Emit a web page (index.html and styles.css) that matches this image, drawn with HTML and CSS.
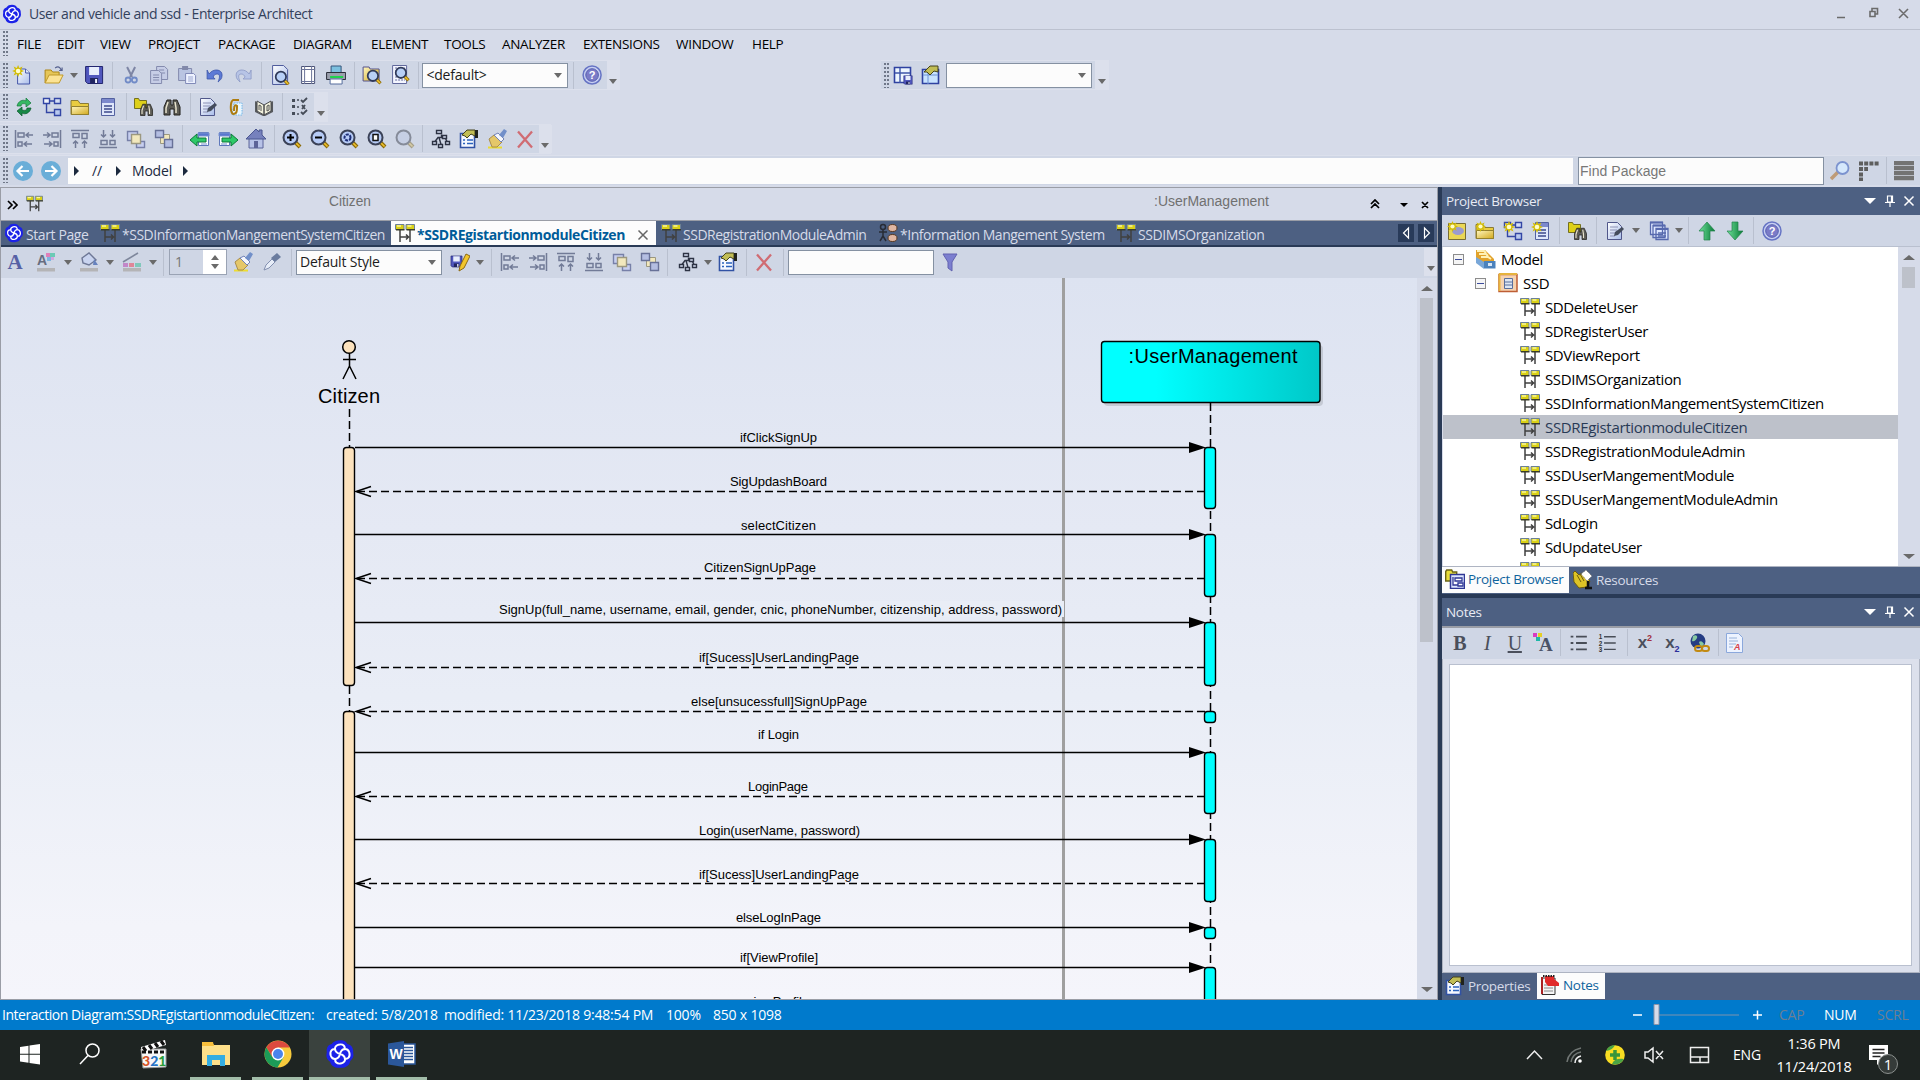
FILE: index.html
```html
<!DOCTYPE html>
<html lang="en">
<head>
<meta charset="utf-8">
<title>User and vehicle and ssd - Enterprise Architect</title>
<link rel="stylesheet" href="styles.css">
</head>
<body>
<svg class="sprite" width="0" height="0">
<defs>
<linearGradient id="cyan" x1="0" x2="1" y1="0" y2="0"><stop offset="0" stop-color="#0ff"/><stop offset=".25" stop-color="#0ff"/><stop offset="1" stop-color="#00c8c8"/></linearGradient>
<linearGradient id="gold" x1="0" x2="1" y1="0" y2="1"><stop offset="0" stop-color="#fff6c0"/><stop offset="1" stop-color="#d2a91c"/></linearGradient>
<linearGradient id="blue" x1="0" x2="1" y1="0" y2="1"><stop offset="0" stop-color="#fff"/><stop offset="1" stop-color="#a9bdea"/></linearGradient>
<linearGradient id="green" x1="0" x2="1"><stop offset="0" stop-color="#6fe09a"/><stop offset="1" stop-color="#067a35"/></linearGradient>
</defs>
<symbol id="logo" viewBox="0 0 20 20"><path d="M10 .8c3 0 4 1 5 2.600 2.500.6 4 2.500 3.800 5.600.6 2.600-.3 4.400-2 5.600-.4 3-3 4.800-6.800 4.600-3.500.2-5.800-1-6.600-4C1 13.500.6 11.500 1.200 9 .8 6 2 4 4.400 3.400 5.800 1.500 7.500.8 10 .8z" fill="#1c22e8"/><g fill="none" stroke="#fff" stroke-width="1.300"><path d="M10 10c-4-1-4.500-5-1-6.200M10 10c1-4 5-4.500 6.200-1M10 10c4 1 4.500 5 1 6.200M10 10c-1 4-5 4.500-6.200 1M9 3.800c3-.8 5 1 3.800 3.500M16.200 9c.8 3-1 5-3.500 3.800M11 16.200c-3 .8-5-1-3.800-3.500M3.800 11c-.8-3 1-5 3.500-3.800"/></g></symbol>
<symbol id="star" viewBox="0 0 12 12"><path d="M6 0l1.300 3L10.500 1.500 9 4.700 12 6 9 7.300l1.500 3.200L7.300 9 6 12 4.700 9 1.500 10.500 3 7.300 0 6l3-1.300L1.500 1.500 4.700 3z" fill="#d3bd08"/><circle cx="6" cy="6" r="2.300" fill="#fffdc8"/></symbol>
<symbol id="new" viewBox="0 0 20 20"><path d="M5.500 4h8l4 4v11h-12z" fill="url(#blue)" stroke="#4557a8"/><path d="M13.500 4v4h4" fill="#eaf3ff" stroke="#4557a8"/><use href="#star" width="12" height="12"/></symbol>
<symbol id="open" viewBox="0 0 20 20"><path d="M1 18V5h6l1.500 2H15v4" fill="#e6c658" stroke="#ae8717"/><path d="M1 18l4-8h14l-4 8z" fill="#fce394" stroke="#c09a2b"/><path d="M11 3c3-2 5-1 6 2M15 5.500h3V2.500" fill="none" stroke="#56618f" stroke-width="1.200"/></symbol>
<symbol id="save" viewBox="0 0 20 20"><path d="M1.500 1.500h17v17h-15l-2-2z" fill="#5057bd" stroke="#23266f"/><path d="M5 2h10v8H5z" fill="#e8eefc"/><path d="M6 13h8v5.500H6z" fill="#202560"/><path d="M11 14h2v4h-2z" fill="#f3f5ff"/></symbol>
<symbol id="cut" viewBox="0 0 20 20"><path d="M6 2l5 10M14 2L9 12" stroke="#7e86a5" stroke-width="2"/><g fill="none" stroke="#718bc7" stroke-width="1.800"><circle cx="7" cy="15" r="2.500"/><circle cx="13.300" cy="15" r="2.500"/></g></symbol>
<symbol id="copy" viewBox="0 0 20 20"><g fill="#c6cde6" stroke="#848bae"><path d="M7.500 1.500h8l3 3v10h-11z"/><path d="M1.500 5.500h8l3 3v10h-11z"/><path d="M4 10h6M4 12.500h6M4 15h6M10 5h5M12 8h4"/></g></symbol>
<symbol id="paste" viewBox="0 0 20 20"><path d="M1.500 3.500h13v12h-13z" fill="#b9c4e2" stroke="#848bae"/><path d="M5 1h6v4H5z" fill="#8289aa"/><path d="M8.500 8.500h8l2 2v8h-10z" fill="#eef2ff" stroke="#818ab8"/><path d="M11 12h5M11 14h5M11 16h5" stroke="#9ba7d0"/></symbol>
<symbol id="undo" viewBox="0 0 20 20"><path d="M4 9c4-6 13-5 13 1 0 4-2 5-4 7 2-5 2-8-1-8-2 0-3 1-4 3l2 2H2V5z" fill="#5d7ad6" stroke="#3c55a8" stroke-width=".8"/></symbol>
<symbol id="redo" viewBox="0 0 20 20"><path d="M16 9C12 3 3 4 3 10c0 4 2 5 4 7-2-5-2-8 1-8 2 0 3 1 4 3l-2 2h8V5z" fill="#b7c4e6" stroke="#8b98c4" stroke-width=".8"/></symbol>
<symbol id="mag" viewBox="0 0 20 20"><path d="M13 13l5 5" stroke="#8b6a08" stroke-width="4"/><path d="M13 13l4.500 4.500" stroke="#f0c22d" stroke-width="2"/><circle cx="8.500" cy="8.500" r="6.500" fill="#b8d0f7" stroke="#303a59" stroke-width="2.200"/></symbol>
<symbol id="preview" viewBox="0 0 20 20"><path d="M2.500.5h11l4 4v15h-15z" fill="url(#blue)" stroke="#4f5c9d"/><use href="#mag" x="4" y="5" width="16" height="16"/></symbol>
<symbol id="page" viewBox="0 0 20 20"><path d="M3.500 1.500h13v17h-13z" fill="#fff" stroke="#4c5377"/><path d="M6.500 1v18M13.500 1v18M3 4.500h14M3 16.500h14" stroke="#6c7499"/></symbol>
<symbol id="print" viewBox="0 0 20 20"><path d="M5 1h10v7H5z" fill="#7cc0df" stroke="#37577d"/><path d="M.5 7.500h19v7H.5z" fill="#9a9fac" stroke="#292d38"/><path d="M4 11h13v2H4z" fill="#20d24c"/><path d="M4 14h12v5H4z" fill="#fff" stroke="#566d9d"/></symbol>
<symbol id="findpkg" viewBox="0 0 20 20"><path d="M1 2h6l1 2h9v12H1z" fill="url(#gold)" stroke="#55528b"/><use href="#mag" x="4" y="4" width="16" height="16"/></symbol>
<symbol id="findpage" viewBox="0 0 20 20"><path d="M2.500.5h14v18h-14z" fill="#f4f6ff" stroke="#62699c"/><path d="M5 3h10M5 6h10M5 9h10M5 12h10M5 15h10" stroke="#62699c" stroke-dasharray="2 1"/><use href="#mag" x="4" y="1" width="16" height="16"/></symbol>
<symbol id="helpring" viewBox="0 0 20 20"><circle cx="10" cy="10" r="9" fill="#c8cff2" stroke="#6674c4" stroke-width="1.500"/><circle cx="10" cy="10" r="6.300" fill="#7b7bc7" stroke="#5560b0"/></symbol>
<symbol id="refresh" viewBox="0 0 20 20"><path d="M3 9c1-5 6-7 9-5V1l5 5-5 4V7c-3-1-5 0-5 2z" fill="#35b862" stroke="#14773b" stroke-width=".7"/><path d="M17 11c-1 5-6 7-9 5v3l-5-5 5-4v3c3 1 5 0 5-2z" fill="#178846" stroke="#0b5a2c" stroke-width=".7"/></symbol>
<symbol id="diag" viewBox="0 0 20 20"><g fill="url(#blue)" stroke="#3346a5" stroke-width="1.400"><path d="M1.500 1.500h6v5h-6zM12.500 1.500h6v5h-6zM12.500 12.500h6v6h-6z"/><path d="M7.500 4h5M4.500 6.500v9h8" fill="none"/></g></symbol>
<symbol id="folder" viewBox="0 0 20 20"><path d="M1 17.500V3.500h7l2 3h8.500v11z" fill="#e9cc40" stroke="#8a7b37"/><path d="M1.500 9.500h17v8h-17z" fill="url(#gold)" stroke="#93802e"/></symbol>
<symbol id="list" viewBox="0 0 20 20"><path d="M3.500 1.500h13v17h-13z" fill="#dfe7fb" stroke="#5361a0"/><path d="M4 2h12v4H4z" fill="#7c89cd"/><path d="M6 9h8M6 12h8M6 15h8" stroke="#3c498c" stroke-width="1.500"/></symbol>
<symbol id="bino" viewBox="0 0 20 20"><path d="M2 18V10l3-7h4v5h2V3h4l3 7v8h-6v-6H8v6z" fill="#5c5b55" stroke="#24231f"/><path d="M4 16v-5l2-6M14 16v-5l-1-6" stroke="#e8e3cd" stroke-width="1.500" fill="none"/></symbol>
<symbol id="pkgbino" viewBox="0 0 20 20"><path d="M.5 11.500v-10h4l1 2h7v8z" fill="#ded019" stroke="#74701e"/><use href="#bino" x="5" y="5" width="15" height="15"/></symbol>
<symbol id="edit" viewBox="0 0 20 20"><path d="M2.500 1.500h10l4 4v13h-14z" fill="url(#blue)" stroke="#50578a"/><path d="M5 6h8M5 9h7M5 12h6M5 15h5" stroke="#8c91b4"/><path d="M9 15l1-4 7-5 2 2-6 6z" fill="#444c5c"/></symbol>
<symbol id="clip" viewBox="0 0 20 20"><path d="M8 6h8v12H6z" fill="#e8f6ff" stroke="#73b8ea" stroke-dasharray="1.500 1"/><path d="M13 3H7C4 5 4 15 7 17c4 0 4-3 4-8-2-2-3 0-3 5" stroke="#ad7c10" stroke-width="2" fill="none"/></symbol>
<symbol id="book" viewBox="0 0 20 20"><path d="M1 4l3 2v9l6 3 6-3V6l3-2v11l-8 4H9l-8-4z" fill="#56595d"/><path d="M3 4l7 4v10l-7-4zM17 4l-7 4v10l7-4z" fill="#f1f0dc" stroke="#4a4b4e"/><path d="M5 13V8l2 1v5M13 9v5l2-1V8z" stroke="#555" fill="none"/></symbol>
<symbol id="checks" viewBox="0 0 20 20"><path d="M2 2h3v3H2zM2 8h3v3H2zM2 15h3v3H2z" fill="#454c58"/><path d="M7 3h2M7 10h2M7 17h2" stroke="#454c58" stroke-width="1.500"/><path d="M11 3l2 2 4-4M12 8l3 4M15 8l-3 4M11 15l2 2 4-4" stroke="#454c58" stroke-width="1.800" fill="none"/></symbol>
<symbol id="al" viewBox="0 0 20 20"><g fill="none" stroke="#727b97" stroke-width="1.500"><path d="M1.500 1v18M4 4h6v4H4zM4 13h4v4H4zM12 6h7M15 3.500L12 6l3 2.500M10 15h8M13 12.500L10 15l3 2.500"/></g></symbol>
<symbol id="at" viewBox="0 0 20 20"><g fill="none" stroke="#727b97" stroke-width="1.500"><path d="M1 1.500h18M3 4.500h6v4H3zM12 4.500h5v5h-5zM5.500 12v7M3 14.500L5.500 12 8 14.500M14.500 12v7M12 14.500l2.500-2.500 2.500 2.500"/></g></symbol>
<symbol id="ab" viewBox="0 0 20 20"><g fill="none" stroke="#727b97" stroke-width="1.500"><path d="M1 18.500h18M3 11.500h6v4H3zM12 11.500h5v4h-5zM5.500 1v7M3 5.500L5.500 8 8 5.500M14.500 1v7M12 5.500L14.500 8 17 5.500"/></g></symbol>
<symbol id="front" viewBox="0 0 20 20"><path d="M1.500 2.500h10v9h-10zM10.500 12.500h8v6h-8z" fill="#c7cff0" stroke="#7780a8" stroke-width="1.400"/><path d="M5.500 5.500h9v9h-9z" fill="#f2e8bd" stroke="#9c9880" stroke-width="1.400"/></symbol>
<symbol id="back" viewBox="0 0 20 20"><path d="M6.500 5.500h9v9h-9z" fill="#f2e8bd" stroke="#9c9880"/><path d="M1.500 1.500h8v7h-8zM10.500 10.500h8v8h-8z" fill="#b4bee2" stroke="#687198" stroke-width="1.400"/></symbol>
<symbol id="goL" viewBox="0 0 20 20"><path d="M8.500 3.500h10v13h-10z" fill="#fff" stroke="#5c76ba"/><path d="M8 4h11v3H8zM11 15h6" fill="#5877ce" stroke="#7891d0"/><path d="M0 11l7-6v4h9v4H7v4z" fill="#2ec968" stroke="#0d7839"/></symbol>
<symbol id="home" viewBox="0 0 20 20"><path d="M3 9h14v10H3z" fill="#b7c2e7" stroke="#5b659a"/><path d="M0 10L10 0l3 3V1h3v5l4 4z" fill="#7681bd" stroke="#4b5690"/><path d="M8 12h4v7H8z" fill="#5c6397"/></symbol>
<symbol id="zoom" viewBox="0 0 20 20"><path d="M13 13l5 5" stroke="#8b6a08" stroke-width="4"/><path d="M13 13l4.500 4.500" stroke="#f0c22d" stroke-width="1.700"/><circle cx="8.500" cy="8.500" r="7" fill="#b6cbf6" stroke="#3b4257" stroke-width="2"/></symbol>
<symbol id="zin" viewBox="0 0 20 20"><use href="#zoom"/><path d="M8.500 5v7M5 8.500h7" stroke="#000" stroke-width="2"/></symbol>
<symbol id="zout" viewBox="0 0 20 20"><use href="#zoom"/><path d="M5 8.500h7" stroke="#000" stroke-width="2"/></symbol>
<symbol id="zback" viewBox="0 0 20 20"><use href="#zoom"/><circle cx="8.500" cy="8.500" r="3" fill="none" stroke="#1c2d77" stroke-width="2" stroke-dasharray="3 1"/></symbol>
<symbol id="zfit" viewBox="0 0 20 20"><use href="#zoom"/><path d="M6 5.500h5v6H6z" fill="#fff" stroke="#111" stroke-width="1.500"/></symbol>
<symbol id="tree" viewBox="0 0 20 20"><g fill="#d9e0f3" stroke="#2d3344" stroke-width="1.400"><path d="M10.500 5.500v3M4 12.500l3-4h7l2 4M8 8.500l2 7" fill="none"/><path d="M5.500 1.500h5v3h-5zM11.500 6.500h4v3h-4zM1.500 12.500h4v3h-4zM7.500 15.500h4v3h-4zM14.500 12.500h4v3h-4z"/></g></symbol>
<symbol id="props" viewBox="0 0 20 20"><path d="M1.500 4.500h14v14h-14z" fill="#f5f8ff" stroke="#3152a4" stroke-width="1.600"/><path d="M4 11h2M4 14.500h2M8 11h6M8 14.500h6" stroke="#2a62bd" stroke-width="1.600"/><path d="M3 6l5-5h8v6l-4-2-4 4-2-2z" fill="#c1bd55" stroke="#45431c"/><path d="M16 1h3v8h-3z" fill="#20221c"/></symbol>
<symbol id="brush" viewBox="0 0 20 20"><path d="M1 18.500h14" stroke="#ecdc31" stroke-width="2"/><path d="M2 10l5-4 8 7-5 5H5z" fill="#e5c769" stroke="#a98d4b"/><path d="M7 6l7 7 3-3-6-6z" fill="#f6f7fc" stroke="#7182b6"/><path d="M12 6l5-6 3 2-4 7z" fill="#718fc9"/></symbol>
<symbol id="del" viewBox="0 0 20 20"><path d="M3 2.500l14 16M17 2.500L3 18.500" stroke="#d06c73" stroke-width="2.300"/></symbol>
<symbol id="tabsave" viewBox="0 0 20 20"><path d="M1.500 2.500h16v15h-16z" fill="#edf6ff" stroke="#2f42a1" stroke-width="1.600"/><path d="M7 3v15M2 8h15" stroke="#3e56a9" stroke-width="1.400"/><use href="#save" x="10" y="10" width="10" height="10"/></symbol>
<symbol id="tabprops" viewBox="0 0 20 20"><path d="M1.500 4.500h16v14h-16z" fill="#c8e3ff" stroke="#2f42a1" stroke-width="1.600"/><path d="M7 5v14M2 10h15" stroke="#6e94d5"/><path d="M3 7l6-6h8v6l-4-1-4 4-3-3z" fill="#c1bd55" stroke="#45431c"/></symbol>
<symbol id="seq" viewBox="0 0 20 20"><path d="M5 6v13M15 6v13M5 14h9M11 11.500l2.500 2.500-2.500 2.500" stroke="#404040" stroke-width="1.500" fill="none"/><path d="M.5 1.500h8.500v5H.5zM11 1.500h8.500v5H11z" fill="#d9d016" stroke="#6b8099"/><path d="M2 3h4M12.500 3h4" stroke="#f8f5a0" stroke-width="1.500"/><path d="M1 6.800h8.500M11.500 6.800H20" stroke="#3b3c2a" stroke-width="1.400"/></symbol>
<symbol id="use" viewBox="0 0 20 20"><g stroke="#272b35" stroke-width="1.500" fill="none"><circle cx="5" cy="4" r="2.500"/><path d="M5 7v6M1 9h8M5 13l-3 5M5 13l3 5"/></g><ellipse cx="14.500" cy="5" rx="4.500" ry="3.500" fill="#dfb6a2" stroke="#56371f"/><ellipse cx="14.500" cy="15" rx="4.500" ry="3.500" fill="#dfb6a2" stroke="#56371f"/></symbol>
<symbol id="bucket" viewBox="0 0 20 20"><path d="M3 6l7-5 7 7-7 5-6-2z" fill="#c9d4ef" stroke="#6e7896" stroke-width="1.400"/><path d="M15 7l4 6h-5z" fill="#6682be"/><path d="M1 16h18v3.500H1z" fill="#b4b4b6"/></symbol>
<symbol id="linecol" viewBox="0 0 20 20"><path d="M1 10L16 1" stroke="#7e879c" stroke-width="1.600"/><path d="M1 11h5v4H1z" fill="#c287c8"/><path d="M7 11h5v4H7z" fill="#df8698"/><path d="M13 11h6v4h-6z" fill="#80c8bb"/><path d="M1 16h18v3.500H1z" fill="#b4b4b6"/></symbol>
<symbol id="drop" viewBox="0 0 20 20"><path d="M2 18l2-5 6-6 3 3-6 6z" fill="#e7edf8" stroke="#8390b0"/><path d="M9 6l6-5 4 4-6 5z" fill="#6b7c9e"/></symbol>
<symbol id="savepen" viewBox="0 0 20 20"><use href="#save" x="0" y="3" width="13" height="13"/><path d="M9 19l1-5L16 2l4 2-6 12z" fill="#f2c62c" stroke="#8c6a14"/></symbol>
<symbol id="filter" viewBox="0 0 20 20"><path d="M3 2h14l-5 8v9l-4-3v-6z" fill="#7c7fd0" stroke="#6262b0"/></symbol>
<symbol id="npkg" viewBox="0 0 20 20"><path d="M1.500 2.500h17v16h-17z" fill="#ead755" stroke="#786d34"/><ellipse cx="11" cy="10" rx="6" ry="4" fill="#9b9bd0"/><use href="#star" width="11" height="11"/></symbol>
<symbol id="nfold" viewBox="0 0 20 20"><use href="#folder"/><use href="#star" width="11" height="11"/></symbol>
<symbol id="ndiag" viewBox="0 0 20 20"><use href="#diag"/><use href="#star" width="12" height="12"/></symbol>
<symbol id="nelem" viewBox="0 0 20 20"><use href="#list" x="1"/><use href="#star" width="12" height="12"/></symbol>
<symbol id="stack" viewBox="0 0 20 20"><g fill="#dfe8ff" stroke="#5769ae" stroke-width="1.300"><path d="M1.500 1.500h12v12h-12zM4 4.500h12v12H4zM7 7.500h12v11H7z"/><path d="M1 1.500h13M4 4.500h12M7 8h12" stroke-width="2"/><path d="M9 12h8M9 15h8"/></g></symbol>
<symbol id="up" viewBox="0 0 20 20"><path d="M10 1l8 9h-5v9H7v-9H2z" fill="url(#green)" stroke="#22824a" stroke-width=".7"/></symbol>
<symbol id="model" viewBox="0 0 20 20"><path d="M0 1h9l9 9v9H8L0 12z" fill="#e2a22a"/><path d="M1 2h7l2 2M3 5h7l2 2M5 8h7l3 2" fill="none" stroke="#fff1b6" stroke-width="2"/><path d="M0 8l8 5v7l-8-6z" fill="#79a7d8"/><path d="M8 12h11.500v7.500H8z" fill="#4b82bd"/><path d="M12 14h4v3h-4z" fill="#d7e7f6"/></symbol>
<symbol id="ssd" viewBox="0 0 20 20"><path d="M1 1.500h18v17H1z" fill="#f6d3b0" stroke="#be5e34" stroke-width="1.500"/><path d="M1 1h18M1.500 1v17" stroke="#e6b33e" stroke-width="2"/><path d="M6.500 5.500h8v10h-8z" fill="#dce6f3" stroke="#5a6f9c"/><path d="M7 9h7M7 12h7" stroke="#5a6f9c"/></symbol>
<symbol id="pbtab" viewBox="0 0 20 20"><path d="M.7 12V2.500l1-1.500h5l1 2h4v9z" fill="#e7dc3b" stroke="#6b6416" stroke-width="1.400"/><path d="M5.500 5.500h14v14h-14z" fill="#dde6ff" stroke="#2f3795" stroke-width="1.500"/><path d="M10 9h7v3h-7zM13 14h5v3h-5zM8 8v8h5" fill="#fff" stroke="#2f3795" stroke-width="1.300"/></symbol>
<symbol id="res" viewBox="0 0 20 20"><path d="M0 3l2-2 4 4 3-2 8 8-3 6-8 1-5-6z" fill="#ddc326" stroke="#6d5c0e"/><path d="M4 5l4 7M7 4l4 7" stroke="#6d5c0e"/><path d="M8 4l5-4 6 6-5 5z" fill="#fff" stroke="#666" stroke-dasharray="1 1"/><path d="M15 11v8M12 18h7" stroke="#111" stroke-width="2.500"/></symbol>
<symbol id="notes" viewBox="0 0 20 20"><path d="M2 3h13v16.500H2z" fill="#f5f5f5" stroke="#333"/><path d="M4 10h9M4 13h9M4 16h9" stroke="#888"/><path d="M2 2v17" stroke="#a22" stroke-width="2"/><path d="M5 1h9v3l5 4v3H8L5 7z" fill="#e12a2a"/><path d="M3 1h12" stroke="#222" stroke-width="2" stroke-dasharray="1.500 1"/></symbol>
<symbol id="ul" viewBox="0 0 20 20"><path d="M1 3h3M1 10h3M1 17h3M7 3h12M7 10h12M7 17h12" stroke="#484d57" stroke-width="2"/></symbol>
<symbol id="globe" viewBox="0 0 20 20"><circle cx="8" cy="8" r="7.500" fill="#243c84"/><path d="M3 3c3-2 5 0 4 2s-3 4-5 3zM9 9c2-2 4 0 5 2l-3 4z" fill="#87c9a1"/><g fill="none" stroke="#c28a12" stroke-width="2"><rect x="5" y="13" width="7" height="5" rx="2.500"/><rect x="12" y="13" width="7" height="5" rx="2.500"/></g></symbol>
<symbol id="search" viewBox="0 0 20 20"><path d="M1 18l7-7" stroke="#bf9b77" stroke-width="3.500"/><circle cx="12.500" cy="7" r="6" fill="#d5e8fc" stroke="#7c93cf" stroke-width="1.800"/></symbol>
<symbol id="pin" viewBox="0 0 12 12"><path d="M3.500 1h5v6h-5zM7.500 1v6M1 7.500h10M6 7.500V12" fill="none" stroke="#fff" stroke-width="1.200"/></symbol>
<symbol id="x" viewBox="0 0 12 12"><path d="M1.500 1.500l9 9M10.500 1.500l-9 9" stroke="currentColor" stroke-width="1.500"/></symbol>
</svg>

<header class="title"><svg class="i20"><use href="#logo"/></svg><span class="title-text">User and vehicle and ssd - Enterprise Architect</span>
<div class="winbtns"><svg width="80" height="20"><path d="M2 13.500h8M35 7.500h5v5h-5zM37 7V4.500h5.500V10H40M64 5l9 9M73 5l-9 9" fill="none" stroke="#6b6b6b" stroke-width="1.600"/></svg></div></header>
<nav class="menu"><i class="grip"></i><span class="w40">FILE</span><span class="w43">EDIT</span><span class="w48">VIEW</span><span class="w70">PROJECT</span><span class="w75">PACKAGE</span><span class="w78">DIAGRAM</span><span class="w73">ELEMENT</span><span class="w58">TOOLS</span><span class="w81">ANALYZER</span><span class="w93">EXTENSIONS</span><span class="w76">WINDOW</span><span>HELP</span></nav>

<div class="row r1">
<div class="bar b1"><i class="grip"></i><svg class="ic"><use href="#new"/></svg><svg class="ic gap4"><use href="#open"/></svg><i class="dd"></i><svg class="ic"><use href="#save"/></svg><i class="sep"></i><svg class="ic"><use href="#cut"/></svg><svg class="ic"><use href="#copy"/></svg><svg class="ic"><use href="#paste"/></svg><svg class="ic"><use href="#undo"/></svg><svg class="ic"><use href="#redo"/></svg><i class="sep"></i><svg class="ic"><use href="#preview"/></svg><svg class="ic"><use href="#page"/></svg><svg class="ic"><use href="#print"/></svg><i class="sep"></i><svg class="ic"><use href="#findpkg"/></svg><svg class="ic"><use href="#findpage"/></svg><i class="sep"></i><div class="combo">&lt;default&gt;<i class="dd"></i></div><i class="sep hs"></i><svg class="ic" viewBox="0 0 20 20"><use href="#helpring"/><text class="qm" x="10" y="14" text-anchor="middle">?</text></svg><i class="over"></i></div>
<div class="bar b1b"><i class="grip"></i><svg class="ic"><use href="#tabsave"/></svg><svg class="ic"><use href="#tabprops"/></svg><div class="combo end"><i class="dd"></i></div><i class="over"></i></div>
</div>
<div class="row r2"><div class="bar b2"><i class="grip"></i><svg class="ic"><use href="#refresh"/></svg><svg class="ic"><use href="#diag"/></svg><svg class="ic"><use href="#folder"/></svg><svg class="ic"><use href="#list"/></svg><i class="sep"></i><svg class="ic"><use href="#pkgbino"/></svg><svg class="ic"><use href="#bino"/></svg><i class="sep"></i><svg class="ic"><use href="#edit"/></svg><svg class="ic"><use href="#clip"/></svg><svg class="ic"><use href="#book"/></svg><i class="sep"></i><svg class="ic"><use href="#checks"/></svg><i class="over"></i></div></div>
<div class="row r3"><div class="bar b2"><i class="grip"></i><svg class="ic"><use href="#al"/></svg><svg class="ic flip"><use href="#al"/></svg><svg class="ic"><use href="#at"/></svg><svg class="ic"><use href="#ab"/></svg><svg class="ic"><use href="#front"/></svg><svg class="ic"><use href="#back"/></svg><i class="sep"></i><svg class="ic"><use href="#goL"/></svg><svg class="ic flip"><use href="#goL"/></svg><svg class="ic"><use href="#home"/></svg><i class="sep"></i><svg class="ic"><use href="#zin"/></svg><svg class="ic"><use href="#zout"/></svg><svg class="ic"><use href="#zback"/></svg><svg class="ic"><use href="#zfit"/></svg><svg class="ic dim"><use href="#zoom"/></svg><i class="sep"></i><svg class="ic"><use href="#tree"/></svg><svg class="ic"><use href="#props"/></svg><svg class="ic"><use href="#brush"/></svg><svg class="ic"><use href="#del"/></svg><i class="over"></i></div></div>

<div class="nav"><i class="grip"></i><svg class="navbtns" width="60" height="28"><g fill="#6aaed8"><circle cx="15" cy="14" r="10"/><circle cx="43" cy="14" r="10"/></g><path d="M21 14H10M14.500 9l-5 5 5 5M37 14h11M43.500 9l5 5-5 5" stroke="#fff" stroke-width="2.200" fill="none"/></svg>
<div class="crumbs"><i class="tri"></i><span class="slashes">//</span><i class="tri"></i><span class="crumb">Model</span><i class="tri"></i></div>
<div class="find">Find Package</div>
<svg class="i20 s"><use href="#search"/></svg>
<svg class="dots" width="20" height="20"><path d="M0 2.500h20M0 8h9M0 13.500h4M0 18.500h4" stroke="#5e5e5e" stroke-width="4" stroke-dasharray="4 1.200"/></svg>
<i class="sep"></i><i class="lines"></i></div>

<main class="main">
<section class="doc">
<div class="strip"><svg width="1436" height="32"><g fill="none" stroke="#000" stroke-width="1.700"><path d="M7 13l4 4-4 4M12 13l4 4-4 4M1370 16l4-4 4 4M1370 20l4-4 4 4M1421 14l6 6M1427 14l-6 6"/></g><path d="M1399 15h8l-4 4z"/><use href="#seq" x="25" y="7" width="17" height="17"/><g class="heads"><text x="328" y="18" textLength="42" lengthAdjust="spacingAndGlyphs">Citizen</text><text x="1153" y="18" textLength="115" lengthAdjust="spacingAndGlyphs">:UserManagement</text></g></svg></div>
<div class="tabs">
<div class="tab t1"><svg class="i20"><use href="#logo"/></svg>Start Page</div>
<div class="tab t2"><svg class="i20"><use href="#seq"/></svg>*SSDInformationMangementSystemCitizen</div>
<div class="tab t3 on"><svg class="i20"><use href="#seq"/></svg>*SSDREgistartionmoduleCitizen<svg class="tx"><use href="#x"/></svg></div>
<div class="tab t4"><svg class="i20"><use href="#seq"/></svg>SSDRegistrationModuleAdmin</div>
<div class="tab t5"><svg class="i20"><use href="#use"/></svg>*Information Mangement System</div>
<div class="tab t6"><svg class="i20"><use href="#seq"/></svg>SSDIMSOrganization</div>
<svg class="tabnav" width="37" height="18"><path d="M0 0h16v18H0zM20 0h16v18H20z" fill="#283a59"/><path d="M10.500 4v10l-5-5zM26.500 4v10l5-5z" fill="none" stroke="#fff" stroke-width="1.200"/></svg>
</div>
<div class="dtb"><b class="ic fa">A</b><svg class="ic ac" viewBox="0 0 20 20"><text class="fa2" x="1" y="13">A</text><path d="M10 1h4v4h-4z" fill="#df7fb9"/><path d="M14 1h5v4h-5z" fill="#6bcab5"/><path d="M11 5h4v4h-4z" fill="#7eb4df"/><path d="M15 5h3v3h-3z" fill="#d2a5df"/><path d="M1 16h18v3.500H1z" fill="#b4b4b6"/></svg><i class="dd w15"></i><svg class="ic"><use href="#bucket"/></svg><i class="dd w14"></i><svg class="ic gap1"><use href="#linecol"/></svg><i class="dd w13"></i><i class="sep"></i><div class="spin"><span>1</span><b><i class="uu"></i><i class="dd"></i></b></div><svg class="ic"><use href="#brush"/></svg><svg class="ic gap1"><use href="#drop"/></svg><i class="sep s4"></i><div class="combo">Default Style<i class="dd"></i></div><svg class="ic pen"><use href="#savepen"/></svg><i class="dd w12"></i><i class="sep s5"></i><svg class="ic"><use href="#al"/></svg><svg class="ic flip"><use href="#al"/></svg><svg class="ic"><use href="#at"/></svg><svg class="ic"><use href="#ab"/></svg><svg class="ic"><use href="#front"/></svg><svg class="ic"><use href="#back"/></svg><i class="sep"></i><svg class="ic tr"><use href="#tree"/></svg><i class="dd w12"></i><svg class="ic"><use href="#props"/></svg><i class="sep"></i><svg class="ic"><use href="#del"/></svg><i class="sep s4"></i><div class="combo"></div><svg class="ic fl"><use href="#filter"/></svg><i class="over"></i></div>
<div class="view">
<svg class="diagram" viewBox="1 278 1416 721" width="1416" height="721">
<rect x="1062" y="278" width="3" height="721" fill="#9f9f9f"/>
<g stroke="#000" stroke-width="1.500" fill="none"><path d="M349.500 409V447M349.500 686V711" stroke-dasharray="8 4"/><path d="M1210.500 403V999" stroke-dasharray="8 4"/>
<path d="M349.500 353V367M343 359.500h13M349.500 366L343 379M349.500 366l6.500 13"/><circle cx="349" cy="347" r="6.300" fill="#fce2bd"/></g>
<rect x="1104" y="345" width="219" height="61" rx="4" fill="#000" opacity=".12"/>
<rect x="1101.500" y="341.500" width="218.500" height="61" rx="3" fill="url(#cyan)" stroke="#000" stroke-width="1.400"/>
<g stroke="#000" stroke-width="1.500"><path d="M355 447.500H1195M355 534.500H1195M355 622.500H1195M355 752.500H1195M355 839.500H1195M355 927.500H1195M355 967.500H1195"/>
<path d="M1205 491.500H356M1205 578.500H356M1205 667.500H356M1205 711.500H356M1205 796.500H356M1205 883.500H356" stroke-dasharray="8 4"/>
<path d="M371 486.500L356 491.500l15 5M371 573.500L356 578.500l15 5M371 662.500L356 667.500l15 5M371 706.500L356 711.500l15 5M371 791.500L356 796.500l15 5M371 878.500L356 883.500l15 5" fill="none"/></g>
<path d="M1189 442l17 5.500-17 5.500zM1189 529l17 5.500-17 5.500zM1189 617l17 5.500-17 5.500zM1189 747l17 5.500-17 5.500zM1189 834l17 5.500-17 5.500zM1189 922l17 5.500-17 5.500zM1189 962l17 5.500-17 5.500z"/>
<g stroke="#000" stroke-width="1.400" fill="#fce2bd"><rect x="343.500" y="447.500" width="11" height="238" rx="3"/><rect x="343.500" y="711.500" width="11" height="300" rx="3"/></g>
<g stroke="#000" stroke-width="1.400" fill="#0ff"><rect x="1204.500" y="447.500" width="11" height="61" rx="3"/><rect x="1204.500" y="534.500" width="11" height="62" rx="3"/><rect x="1204.500" y="622.500" width="11" height="63" rx="3"/><rect x="1204.500" y="711.500" width="11" height="11" rx="3"/><rect x="1204.500" y="752.500" width="11" height="61" rx="3"/><rect x="1204.500" y="839.500" width="11" height="62" rx="3"/><rect x="1204.500" y="927.500" width="11" height="11" rx="3"/><rect x="1204.500" y="967.500" width="11" height="50" rx="3"/></g>
<rect x="499" y="601" width="565" height="16" fill="#e9edf6"/>
<g class="names"><text x="318" y="403" textLength="62">Citizen</text><text x="1128.500" y="363" textLength="169">:UserManagement</text></g>
<g class="msgs"><text x="740" y="442" textLength="77">ifClickSignUp</text><text x="730" y="486" textLength="97">SigUpdashBoard</text><text x="741" y="530" textLength="75">selectCitizen</text><text x="704" y="572" textLength="112">CitizenSignUpPage</text><text x="499" y="614" textLength="563">SignUp(full_name, username, email, gender, cnic, phoneNumber, citizenship, address, password)</text><text x="699" y="662" textLength="160">if[Sucess]UserLandingPage</text><text x="691" y="706" textLength="176">else[unsucessfull]SignUpPage</text><text x="758" y="739" textLength="41">if Login</text><text x="748" y="791" textLength="60">LoginPage</text><text x="699" y="835" textLength="161">Login(userName, password)</text><text x="699" y="879" textLength="160">if[Sucess]UserLandingPage</text><text x="736" y="922" textLength="85">elseLogInPage</text><text x="740" y="962" textLength="78">if[ViewProfile]</text><text x="747" y="1006" textLength="62">viewProfile</text></g>
</svg>
<div class="vs"><i class="uu"></i><i class="thumb"></i><i class="dd"></i></div>
</div>
</section>

<aside class="side">
<section class="panel browser">
<div class="ph">Project Browser<span class="pbtns"><i class="dd"></i><svg class="pi"><use href="#pin"/></svg><svg class="pi"><use href="#x"/></svg></span></div>
<div class="ptb"><svg class="ic"><use href="#npkg"/></svg><svg class="ic"><use href="#nfold"/></svg><svg class="ic"><use href="#ndiag"/></svg><svg class="ic"><use href="#nelem"/></svg><i class="sep"></i><svg class="ic"><use href="#pkgbino"/></svg><i class="sep"></i><svg class="ic"><use href="#edit"/></svg><i class="dd w15"></i><svg class="ic gap1"><use href="#stack"/></svg><i class="dd w12"></i><i class="sep"></i><svg class="ic"><use href="#up"/></svg><svg class="ic down"><use href="#up"/></svg><i class="sep"></i><svg class="ic" viewBox="0 0 20 20"><use href="#helpring"/><text class="qm" x="10" y="14" text-anchor="middle">?</text></svg></div>
<div class="treebox"><ul class="tree">
<li class="l0"><i class="minus"></i><svg class="i20"><use href="#model"/></svg>Model</li>
<li class="l1"><i class="minus"></i><svg class="i20"><use href="#ssd"/></svg>SSD</li>
<li><svg class="i20"><use href="#seq"/></svg>SDDeleteUser</li>
<li><svg class="i20"><use href="#seq"/></svg>SDRegisterUser</li>
<li><svg class="i20"><use href="#seq"/></svg>SDViewReport</li>
<li><svg class="i20"><use href="#seq"/></svg>SSDIMSOrganization</li>
<li><svg class="i20"><use href="#seq"/></svg>SSDInformationMangementSystemCitizen</li>
<li class="sel"><svg class="i20"><use href="#seq"/></svg>SSDREgistartionmoduleCitizen</li>
<li><svg class="i20"><use href="#seq"/></svg>SSDRegistrationModuleAdmin</li>
<li><svg class="i20"><use href="#seq"/></svg>SSDUserMangementModule</li>
<li><svg class="i20"><use href="#seq"/></svg>SSDUserMangementModuleAdmin</li>
<li><svg class="i20"><use href="#seq"/></svg>SdLogin</li>
<li><svg class="i20"><use href="#seq"/></svg>SdUpdateUser</li>
<li><svg class="i20"><use href="#seq"/></svg></li>
</ul><div class="vs"><i class="uu"></i><i class="thumb"></i><i class="dd"></i></div></div>
<div class="ptabs"><div class="pt on pb"><svg class="i20"><use href="#pbtab"/></svg>Project Browser</div><div class="pt rs"><svg class="i20"><use href="#res"/></svg>Resources</div></div>
</section>
<section class="panel notes">
<div class="ph">Notes<span class="pbtns"><i class="dd"></i><svg class="pi"><use href="#pin"/></svg><svg class="pi"><use href="#x"/></svg></span></div>
<div class="ntb"><b class="fmt">B</b><i class="fmt">I</i><u class="fmt">U</u><svg class="ic" viewBox="0 0 20 20"><text class="ta" x="6" y="18">A</text><path d="M0 0h4v4H0z" fill="#d93cc1"/><path d="M5 0h4v4H5z" fill="#e5ce24"/><path d="M3 4h4v4H3z" fill="#1bb7a7"/></svg><i class="sep"></i><svg class="il"><use href="#ul"/></svg><svg class="il" viewBox="0 0 20 20"><path d="M7 3h13M7 10h13M7 17h13" stroke="#484d57" stroke-width="1.500"/><g class="nums"><text x="1" y="6">1</text><text x="1" y="13">2</text><text x="1" y="19.700">3</text></g></svg><i class="sep ns"></i><span class="sx">x<sup>2</sup></span><span class="sx">x<sub>2</sub></span><svg class="ic"><use href="#globe"/></svg><i class="sep"></i><svg class="ic dcl" viewBox="0 0 20 20"><path d="M2.500.5h12l4 4v15h-16z" fill="#edf3ff" stroke="#8ba8dc"/><path d="M5 5h8M5 8h9M5 11h7M5 14h4" stroke="#98b2d9"/><text class="da" x="10" y="17">A</text></svg></div>
<div class="nbody"><div class="ntext"></div></div>
<div class="ptabs bt"><div class="pt pr"><svg class="i20"><use href="#props"/></svg>Properties</div><div class="pt on nt"><svg class="i20"><use href="#notes"/></svg>Notes</div></div>
</section>
</aside>
</main>

<footer class="status"><span class="s1">Interaction Diagram:SSDREgistartionmoduleCitizen:</span><span class="s2">created: 5/8/2018</span><span class="s3">modified: 11/23/2018 9:48:54 PM</span><span class="st4">100%</span><span>850 x 1098</span>
<svg class="slider" width="130" height="26"><path d="M0 13h9M120 13h9M124.500 8.500v9" stroke="#fff" stroke-width="1.500"/><path d="M22 13H106" stroke="#7d93ad"/><path d="M21 2.500h5v20h-5z" fill="#d6dbe9" stroke="#8a93a8"/></svg><span class="s6">CAP</span><span class="s7">NUM</span><span class="s6 sc">SCRL</span></footer>

<footer class="task">
<div class="app a1"><svg width="22" height="22"><path d="M1 4l8.500-1.200v8H1zM10.500 2.600L21 1v9.800H10.500zM1 11.800h8.500v8L1 18.600zM10.500 11.800H21V21.500l-10.500-1.500z" fill="#fff"/></svg></div>
<div class="app a2"><svg width="22" height="22"><circle cx="13.500" cy="7.500" r="6.500" fill="none" stroke="#fff" stroke-width="1.500"/><path d="M9 12.500L1 21" stroke="#fff" stroke-width="1.500"/></svg></div>
<div class="app a3"><svg width="28" height="30"><path d="M1 10h25v18l-23 1z" fill="#f7f7f7" stroke="#999"/><path d="M1 8l24-7 1 5-24 7z" fill="#fff"/><path d="M3 8l3 4M9 6l3 4M15 4l3 4M21 2l3 4" stroke="#111" stroke-width="3"/><path d="M2 13h24" stroke="#111" stroke-width="3" stroke-dasharray="4 2"/><text class="clap" x="2" y="27"><tspan fill="#d65528">3</tspan><tspan fill="#2672c4">2</tspan><tspan fill="#2e9c3a">1</tspan></text></svg></div>
<div class="app a4 run"><svg width="28" height="26"><path d="M0 2h10l2 2h16v20H0z" fill="#fee08a"/><path d="M0 1h11l1 4H0z" fill="#f8bf3c"/><path d="M5 14h18v11h-5v-6h-8v6H5z" fill="#34ade2"/></svg></div>
<div class="app a5 run"><svg width="28" height="28" viewBox="-14 -14 28 28"><circle r="13.500" fill="#f7ca3c"/><path d="M0-6.500H11.700A13.500 13.500 0 0 0-11.700-6.700L-5.600 3.300Z" fill="#dc4a3e"/><path d="M-11.700-6.700A13.500 13.500 0 0 0-.5 13.500L5.600 3.300-5.600 3.300Z" fill="#1c9c58"/><circle r="6.400" fill="#fff"/><circle r="5" fill="#4a84ec"/></svg></div>
<div class="app a6 cur"><svg width="30" height="30"><use href="#logo"/></svg></div>
<div class="app a7 run"><svg width="28" height="28"><path d="M14 4h13v20H14z" fill="#fff" stroke="#2b579a" stroke-width="1.500"/><path d="M15 7.500h10M15 10.500h10M15 13.500h10M15 16.500h10M15 19.500h10" stroke="#2b579a" stroke-width="1.500"/><path d="M0 3.500L16 1v26L0 24.500z" fill="#2b579a"/><text class="wl" x="8" y="19" text-anchor="middle">W</text></svg></div>
<svg class="tray" width="200" height="50"><g fill="none" stroke="#eee" stroke-width="1.500"><path d="M2 29l7.500-8 7.500 8M120 22h3l5-4v14l-5-4h-3zM131 21l7 8M138 21l-7 8M165.500 17.500h18v15h-18zM165.500 27h18M175 27v5"/><path d="M42 32c1-7 5-12 14-14M46 32c1-5 4-9 10-10" stroke="#707674"/><path d="M50 33c0-4 2-6 6-7"/></g><circle cx="55" cy="31" r="1.800" fill="#fff"/><circle cx="90" cy="25" r="9.800" fill="#f9dd22"/><path d="M81 21a10 10 0 0 1 9-6q-2 5-9 6M99 29a10 10 0 0 1-12 5q2-6 12-5" fill="#4ba444"/><path d="M90 20v10M85 25h10" stroke="#36953b" stroke-width="3.500"/></svg>
<span class="lang">ENG</span>
<div class="clock"><span>1:36 PM</span><span>11/24/2018</span></div>
<svg class="action" width="40" height="50"><path d="M1 15h19v15h-6l-5 5v-5H1z" fill="#fff"/><path d="M4.500 19.500h12M4.500 23h12M4.500 26.500h8" stroke="#222" stroke-width="1.300"/><circle cx="20" cy="34" r="9.500" fill="#353b39" stroke="#8b908e"/><text x="20" y="39.500" text-anchor="middle" fill="#fff" font-family="Open Sans" font-size="15">1</text></svg>
</footer>
</body>
</html>
```
FILE: styles.css
```css
* { box-sizing: border-box; }
body { margin: 0; width: 1920px; height: 1080px; overflow: hidden; display: flex; flex-direction: column; background: #d6dbe9; color: #1b1b1b; font: 14px/20px "Open Sans", "Noto Sans", sans-serif; letter-spacing: -.2px; white-space: nowrap; }
svg { display: block; flex: none; }
i { font-style: normal; flex: none; }
.sprite { position: absolute; }
.i20 { width: 20px; height: 20px; }
.ic { width: 28px; height: 20px; padding: 0 4px; }
.flip { transform: scaleX(-1); }
.down { transform: scaleY(-1); }
.dim { opacity: .5; filter: grayscale(.4); }
.gap1 { margin-left: 1px; }
.gap4 { margin-left: 4px; }
.qm { font: bold 11px "Liberation Sans", sans-serif; fill: #fff; letter-spacing: 0; }
.sep { width: 1px; height: 27px; margin: 0 3.500px; background: #b9c0cf; }
.grip { width: 5px; height: 25px; margin: 0 2px 0 3px; background: radial-gradient(circle at 1px 1px, #6f7788 .8px, transparent 1px) 0 0/3px 4px; }
.dd, .uu { display: flex; width: 12px; justify-content: center; }
.dd::before, .uu::before { content: ""; border: 4px solid transparent; border-top: 5px solid #6a6a6a; border-bottom: 0; }
.uu::before { border-top: 0; border-bottom: 5px solid #6a6a6a; }
.w12 { width: 12px; }
.w13 { width: 13px; }
.w14 { width: 14px; }
.w15 { width: 15px; }
.over { width: 13px; height: 28px; margin-left: auto; background: #dce0ec; display: flex; align-items: flex-end; justify-content: center; padding-bottom: 5px; }
.over::before { content: ""; border: 4px solid transparent; border-top: 5px solid #6a6a6a; border-bottom: 0; }
.combo { width: 146px; height: 25px; border: 1px solid #8591a2; background: #fcfcfc; display: flex; align-items: center; justify-content: space-between; padding: 0 3px; flex: none; }
.end { justify-content: flex-end; }

.title { height: 30px; border-bottom: 1px solid #bcc1cf; display: flex; align-items: center; padding: 0 0 2px 2px; color: #33415c; letter-spacing: -.41px; }
.title-text { margin-left: 7px; }
.winbtns { margin-left: auto; width: 85px; }
.menu { height: 30px; display: flex; align-items: center; color: #000; padding-bottom: 3px; }
.menu .grip { margin-right: 9px; }
.menu span { flex: none; letter-spacing: -.3px; font-size: 13.500px; }
.w40 { width: 40px; } .w43 { width: 43px; } .w48 { width: 48px; } .w70 { width: 70px; } .w75 { width: 75px; } .w78 { width: 78px; } .w73 { width: 73px; } .w58 { width: 58px; } .w81 { width: 81px; } .w93 { width: 93px; } .w76 { width: 76px; }

.row { display: flex; align-items: center; }
.r1, .r2 { height: 31px; }
.r1 { padding-bottom: 1px; }
.r3 { height: 33px; }
.bar { height: 30px; display: flex; align-items: center; background: #cfd6e5; border: 1px solid #dce0ec; border-left: 0; }
.b1 { width: 620px; }
.b1 .grip { margin-right: 0; }
.b1 .ic { width: 28.200px; }
.hs { margin: 0 4.500px; }
.b1b { width: 228px; margin-left: 261px; }
.b1b .grip { margin-right: 0; }
.b1b .combo { margin-left: 1px; }
.b2 .grip { margin-right: 2px; }
.b2 .ic { width: 28.050px; }
.r2 .b2 { width: 328px; }
.r3 .b2 { width: 551px; }

.nav { height: 32px; display: flex; align-items: center; background: #cfd6e5; border-top: 1px solid #dce0ec; border-bottom: 2px solid #d6dbe9; }
.navbtns { margin: 0 0 0 -2px; }
.crumbs { width: 1505px; height: 26px; background: #fcfcfc; display: flex; align-items: center; padding-left: 6px; color: #1b293e; }
.tri { border: 5px solid transparent; border-left: 5px solid #1b293e; border-right: 0; }
.slashes { width: 21px; margin: 0 3px 0 13px; }
.crumb { margin: 0 11px 0 11px; }
.find { width: 246px; height: 28px; margin-left: 5px; border: 1px solid #8591a2; background: #fcfcfc; color: #777; font: 14px/26px "Liberation Sans", sans-serif; letter-spacing: .05px; padding-left: 1px; }
.s { margin: 0 9px 0 6px; }
.nav .sep { margin: 0 7px; }
.lines { width: 20px; height: 20px; background: repeating-linear-gradient(#737373 0 4px, #b9bdc6 4px 5px); }

.main { height: 813px; display: flex; background: #293a56; }
.doc { width: 1438px; display: flex; flex-direction: column; border: 1px solid #9a9da6; background: #d6dbe9; }
.strip { height: 33px; border-bottom: 1px solid #9a9da6; }
.heads { font: 14px "Liberation Sans", sans-serif; fill: #707070; letter-spacing: 0; }
.tabs { height: 26px; background: #4d6082; display: flex; border-bottom: 2px solid #293a56; color: #d6dbe9; align-items: center; letter-spacing: -.48px; }
.tab { display: flex; align-items: center; height: 24px; padding-top: 3px; gap: 2px; flex: none; }
.tabs .i20 { margin-top: -3px; }
.t1 { width: 95px; padding-left: 3px; letter-spacing: -.4px; }
.t2 { width: 295px; padding-left: 4px; }
.tab.on { width: 265px; padding-left: 4px; background: #fcfcfc; color: #005c99; font-weight: bold; letter-spacing: -.4px; }
.tx { width: 12px; height: 12px; margin-left: auto; margin-right: 7px; color: #666; }
.t4 { width: 217px; padding-left: 5px; }
.t5 { width: 238px; padding-left: 5px; }
.t6 { padding-left: 5px; letter-spacing: -.4px; }
.tabnav { margin-left: auto; margin-right: 2px; }
.dtb { height: 31px; background: #cfd6e5; display: flex; align-items: center; padding-bottom: 1px; }
.fa { font: bold 21px/20px "Liberation Serif", serif; color: #5761a5; text-align: center; flex: none; }
.fa2 { font: bold 14px "Liberation Sans", sans-serif; fill: #666d80; }
.ac { margin-left: 3px; }
.spin { width: 58px; height: 26px; margin: 0 2px; border: 1px solid #9aa3b4; display: flex; color: #777; padding-left: 5px; justify-content: space-between; line-height: 24px; }
.spin b { width: 23px; background: #fff; display: flex; flex-direction: column; align-items: center; justify-content: space-evenly; }
.s4 { margin: 0 4px 0 5px; }
.s5 { margin: 0 4px 0 4.500px; }
.pen { margin-left: 4px; }
.tr { margin-left: 2.500px; }
.fl { margin-left: 2px; }
.view { flex: 1; display: flex; }
.diagram { background: linear-gradient(#dde3f1, #e5e9f4 35%, #e9edf6 58%, #f3f4fa 90%, #f5f5fb); }
.names { font: 20px "Liberation Sans", sans-serif; letter-spacing: 0; }
.msgs { font: 13px "Liberation Sans", sans-serif; letter-spacing: 0; }
.names, .msgs { fill: #000; }
.vs { width: 19px; background: #d6dbe9; display: flex; flex-direction: column; align-items: center; padding: 8px 0 7px; }
.vs .dd { margin-top: auto; }
.vs .dd::before, .vs .uu::before { border-left-width: 6px; border-right-width: 6px; }
.thumb { width: 13px; height: 344px; margin-top: 7px; background: #bdc1ca; }

.side { width: 478px; margin-left: 4px; display: flex; flex-direction: column; gap: 4px; }
.ph { height: 28px; background: #4d6082; color: #e8ebf4; display: flex; align-items: center; padding: 0 5px 0 4px; font-size: 13.500px; letter-spacing: -.3px; }
.pbtns { margin-left: auto; display: flex; align-items: center; gap: 7.500px; color: #fff; }
.pbtns .dd::before { border-width: 6px 6px 0; border-top-color: #fff; }
.pi { width: 12px; height: 12px; }
.browser { height: 407px; }
.ptb { height: 32px; background: #cfd6e5; border-bottom: 1px solid #b9c0cf; display: flex; align-items: center; padding-left: 1px; }
.ptb .sep { margin: 0 3.900px; }
.treebox { height: 320px; display: flex; background: #d6dbe9; border-bottom: 1px solid #aeb4c2; padding-left: 1px; }
.tree { margin: 0; padding: 0; width: 455px; height: 319px; overflow: hidden; list-style: none; background: #fff; color: #000; font-size: 15px; letter-spacing: -.38px; }
.tree li { height: 24px; display: flex; align-items: center; padding-left: 77px; gap: 5px; }
.tree .l0 { padding-left: 10px; }
.tree .l1 { padding-left: 32px; }
.minus { width: 11px; height: 11px; margin-right: 7px; border: 1px solid #8c8c8c; background: linear-gradient(#3c4c9c, #3c4c9c) center/7px 1px no-repeat #f5f5f5; }
.tree .sel { background: #bdc1ca; color: #293a56; letter-spacing: -.33px; }
.treebox .vs { width: 21px; }
.treebox .thumb { height: 21px; }
.ptabs { height: 27px; background: #4d6082; color: #d6dbe9; display: flex; align-items: center; font-size: 13.500px; letter-spacing: -.3px; }
.pt { display: flex; align-items: center; height: 26px; gap: 3px; padding-left: 3px; padding-bottom: 1px; }
.pt.on { background: #fcfcfc; color: #0e639c; align-self: flex-start; padding-bottom: 2px; }
.pb { width: 127px; }
.rs { padding-left: 4px; }
.notes { flex: 1; display: flex; flex-direction: column; }
.ntb { height: 33px; border-top: 2px solid #9a9da6; background: #cfd6e5; display: flex; align-items: center; padding: 0 0 2px 4px; }
.fmt { width: 27.500px; text-align: center; font: bold 20px/26px "Liberation Serif", serif; color: #4a4f5b; }
i.fmt { font-style: italic; font-weight: normal; }
u.fmt { font-weight: normal; }
.ta { font: bold 19px "Liberation Serif", serif; fill: #4a5268; }
.nums { font: bold 7px "Liberation Sans", sans-serif; fill: #333; }
.da { font: italic bold 9px "Liberation Sans", sans-serif; fill: #d8434a; }
.dcl { margin-left: -2px; }
.il { width: 27.500px; height: 18px; padding: 0 4px; margin-left: .5px; }
.ns { margin-left: 6px; }
.sx { width: 27.500px; text-align: center; font: bold 17px/24px "Liberation Sans", sans-serif; color: #4a4f5b; }
.sx sup, .sx sub { font-size: 9px; line-height: 0; color: #a3303e; }
.sx sub { color: #2b2f9a; }
.nbody { flex: 1; background: #dce0ec; padding: 5px 7px 6px 6px; border: solid #aeb4c2; border-width: 0 1px 1px; }
.ntext { height: 100%; background: #fff; border: 1px solid #b9c0cf; }
.bt { height: 27px; }
.pr { width: 95px; }
.nt { width: 68px; }

.status { height: 30px; background: #007acc; color: #fff; display: flex; align-items: center; padding-left: 2px; padding-bottom: 1px; }
.s1 { width: 324px; letter-spacing: -.47px; } .s2 { width: 118px; } .s3 { width: 222px; } .st4 { width: 47px; }
.slider { margin-left: auto; margin-right: 16px; }
.s6, .s7 { width: 45px; color: #6c7f92; }
.s7 { color: #fff; width: 53px; }
.sc { width: 43px; }
.task { height: 50px; background: #1e2422; color: #fff; display: flex; align-items: center; }
.app { height: 50px; width: 62px; display: flex; align-items: center; justify-content: center; flex: none; border-bottom: 3px solid transparent; }
.a1 { width: 60px; }
.a2 { width: 60px; }
.a3 { width: 67px; margin-right: 3px; }
.a4, .a5 { width: 51px; margin-right: 11px; }
.a5 { margin-right: 6px; }
.run { border-bottom-color: #a2bda9; }
.cur { width: 61px; background: #3a423e; border-bottom-color: #a2bda9; }
.a7 { width: 51px; margin-left: 6px; }
.clap { font: 900 14px Lato, sans-serif; letter-spacing: 0; }
.wl { font: bold 14px "Liberation Sans", sans-serif; fill: #fff; letter-spacing: 0; }
.tray { margin-left: auto; }
.lang { width: 36px; margin-left: 8px; }
.clock { width: 90px; display: flex; flex-direction: column; text-align: center; line-height: 23px; font-size: 14.500px; }
.action { margin-left: 9px; margin-right: 12px; }
```
